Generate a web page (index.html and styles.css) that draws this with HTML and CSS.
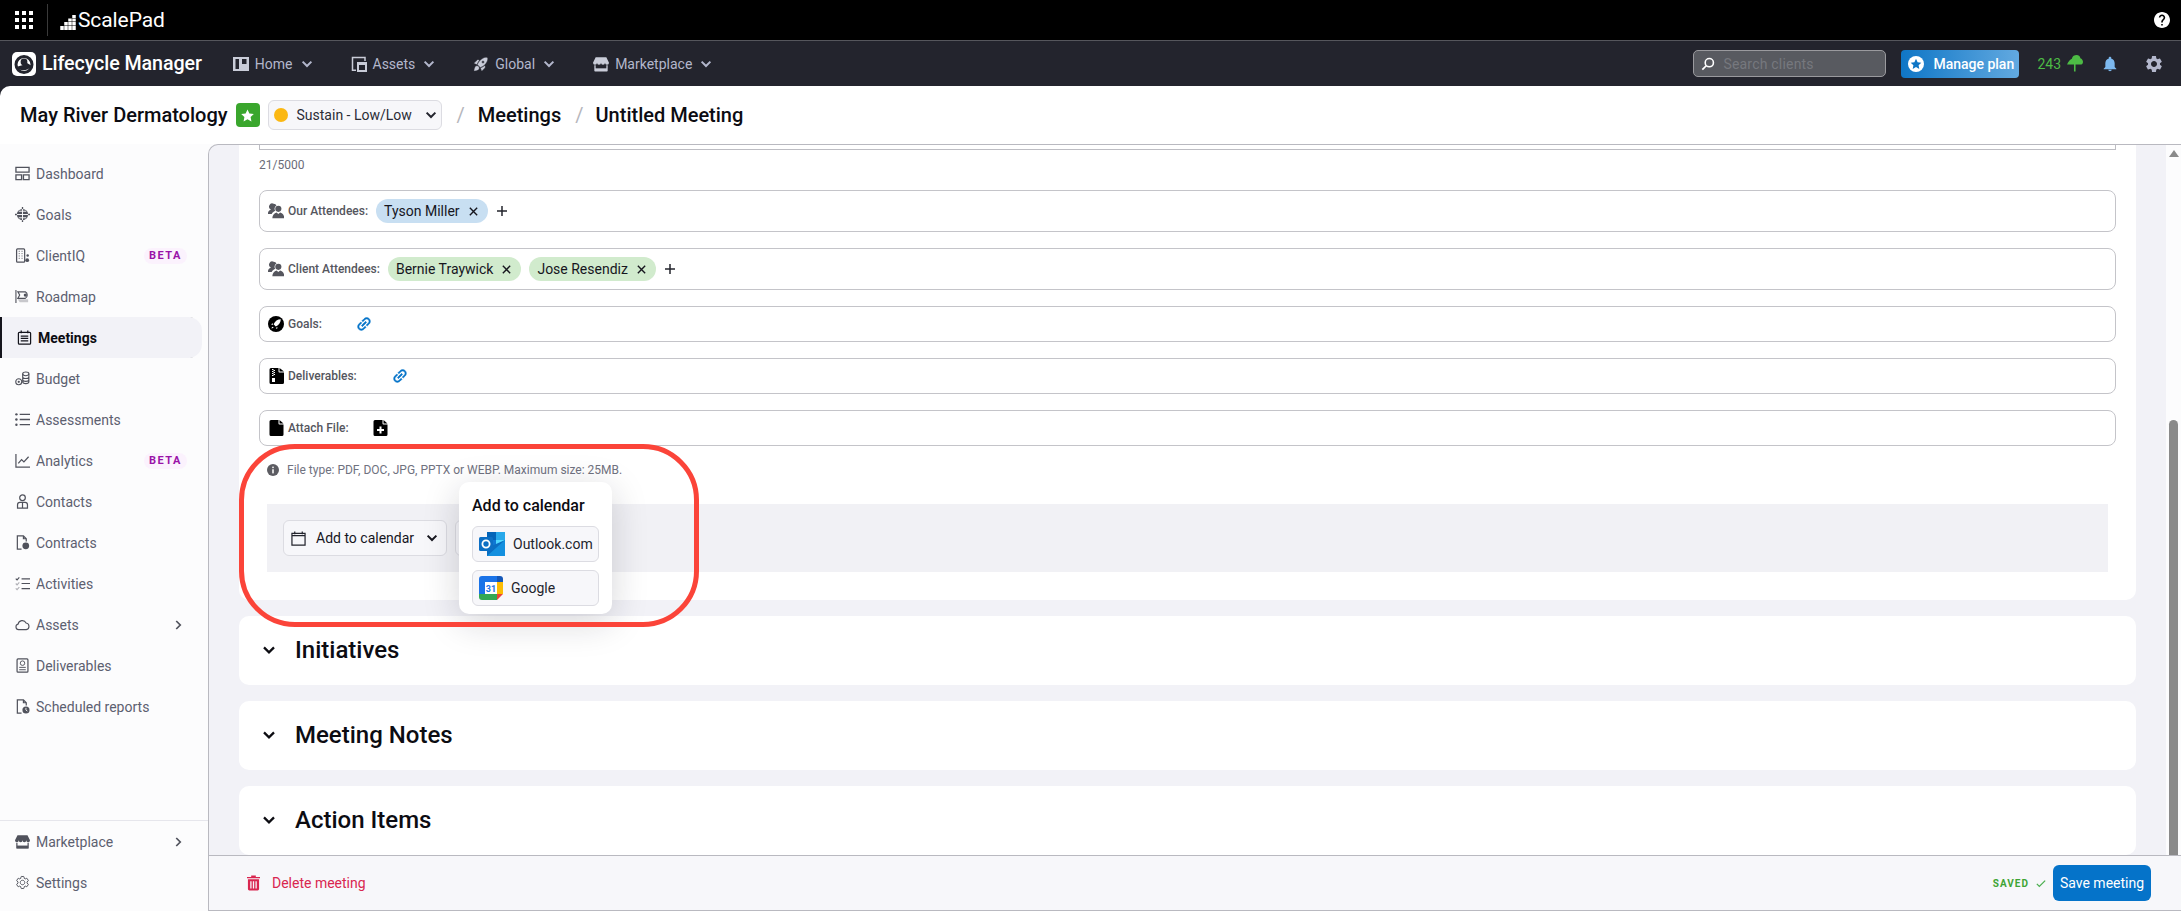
FILE: index.html
```html
<!DOCTYPE html>
<html lang="en">
<head>
<meta charset="utf-8">
<title>Untitled Meeting</title>
<link rel="stylesheet" href="styles.css">
</head>
<body>
<svg class="sprite" aria-hidden="true">
  <symbol id="chev" viewBox="0 0 24 24"><path d="M4.500 8l7.500 7.500L19.500 8" fill="none" stroke="currentColor" stroke-width="3.400"/></symbol>
  <symbol id="chevr" viewBox="0 0 24 24"><path d="M8.500 4l8 8-8 8" fill="none" stroke="currentColor" stroke-width="3.400"/></symbol>
  <symbol id="link" viewBox="0 0 24 24"><path transform="rotate(-45 12 12)" fill="currentColor" stroke="currentColor" stroke-width=".6" d="M3.900 12c0-1.710 1.390-3.100 3.100-3.100h4V7H7c-2.760 0-5 2.240-5 5s2.240 5 5 5h4v-1.900H7c-1.710 0-3.100-1.390-3.100-3.100zM8 13h8v-2H8v2zm9-6h-4v1.900h4c1.710 0 3.100 1.390 3.100 3.100s-1.390 3.100-3.100 3.100h-4V17h4c2.760 0 5-2.240 5-5s-2.240-5-5-5z"/></symbol>
  <symbol id="people" viewBox="0 0 24 24"><path fill="currentColor" d="M8.500 1a4.500 4.500 0 0 1 4.200 2.900 5.500 5.500 0 0 0-2.900 4.800c0 1.100.3 2.200 1 3l-2.300 1.400C7 13.900 6 15 5.500 16.500H.5c-.5 0-.8-.4-.7-.9.5-3 2.200-4.800 4.700-5.700A4.500 4.500 0 0 1 8.500 1z"/><circle cx="15.500" cy="8.800" r="4.600" fill="currentColor"/><path fill="currentColor" d="M6.500 23c0-4.600 2.800-8.200 6.300-8.800l2.700 2.300 2.700-2.300c3.500.6 6.300 4.200 6.300 8.800z"/></symbol>
  <symbol id="gear" viewBox="0 0 24 24"><path d="M19.140 12.940c.04-.3.06-.61.06-.94 0-.32-.02-.64-.07-.94l2.030-1.580c.18-.14.23-.41.12-.61l-1.920-3.320c-.12-.22-.37-.29-.59-.22l-2.390.96c-.5-.38-1.030-.7-1.620-.94l-.36-2.540c-.04-.24-.24-.41-.48-.41h-3.840c-.24 0-.43.17-.47.41l-.36 2.540c-.59.24-1.130.57-1.620.94l-2.390-.96c-.22-.08-.47 0-.59.22L2.740 8.870c-.12.21-.08.47.12.61l2.030 1.580c-.05.3-.09.63-.09.94s.02.64.07.94l-2.030 1.580c-.18.14-.23.41-.12.61l1.920 3.320c.12.22.37.29.59.22l2.390-.96c.5.38 1.030.7 1.620.94l.36 2.540c.05.24.24.41.48.41h3.840c.24 0 .44-.17.47-.41l.36-2.540c.59-.24 1.130-.56 1.620-.94l2.390.96c.22.08.47 0 .59-.22l1.920-3.320c.12-.22.07-.47-.12-.61l-2.010-1.580zM12 15.600c-1.980 0-3.600-1.620-3.600-3.600s1.620-3.600 3.600-3.600 3.600 1.620 3.600 3.600-1.620 3.600-3.600 3.600z"/></symbol>
  <symbol id="store" viewBox="0 0 24 24"><path fill="currentColor" d="M4 2h16l4 8a3 3 0 0 1-6 0 3 3 0 0 1-6 0 3 3 0 0 1-6 0 3 3 0 0 1-6 0z"/><path fill="none" stroke="currentColor" stroke-width="2" d="M3 14v8h18v-8"/><path fill="currentColor" d="M3 18.500h18V23H3z"/></symbol>
  <symbol id="x" viewBox="0 0 24 24"><path d="M4 4l16 16M20 4L4 20" fill="none" stroke="currentColor" stroke-width="3"/></symbol>
  <symbol id="plus" viewBox="0 0 24 24"><path d="M12 2v20M2 12h20" fill="none" stroke="currentColor" stroke-width="3"/></symbol>
</svg>

<div class="topbar">
  <svg class="ic-grid" viewBox="0 0 18 18"><g fill="#fff"><rect x="0" y="0" width="4" height="4"/><rect x="7" y="0" width="4" height="4"/><rect x="14" y="0" width="4" height="4"/><rect x="0" y="7" width="4" height="4"/><rect x="7" y="7" width="4" height="4"/><rect x="14" y="7" width="4" height="4"/><rect x="0" y="14" width="4" height="4"/><rect x="7" y="14" width="4" height="4"/><rect x="14" y="14" width="4" height="4"/></g></svg>
  <span class="top-divider"></span>
  <svg class="ic-scale" viewBox="0 0 15.500 15"><g fill="#fff"><rect x="0" y="11" width="3.500" height="4"/><rect x="4" y="7" width="3.500" height="3.500"/><rect x="4" y="11" width="3.500" height="4"/><rect x="8" y="3.500" width="3.500" height="3"/><rect x="8" y="7" width="3.500" height="3.500"/><rect x="8" y="11" width="3.500" height="4"/><rect x="12" y="0" width="3.500" height="3"/><rect x="12" y="3.500" width="3.500" height="3"/><rect x="12" y="7" width="3.500" height="3.500"/><rect x="12" y="11" width="3.500" height="4"/></g></svg>
  <span class="brand">ScalePad</span>
  <svg class="ic-help" viewBox="2 2 20 20"><path fill="#fff" d="M12 2C6.480 2 2 6.480 2 12s4.480 10 10 10 10-4.480 10-10S17.520 2 12 2zm1 17h-2v-2h2v2zm2.070-7.750l-.9.92C13.450 12.900 13 13.500 13 15h-2v-.5c0-1.100.45-2.100 1.170-2.830l1.240-1.260c.37-.36.59-.86.59-1.410 0-1.100-.9-2-2-2s-2 .9-2 2H8c0-2.210 1.790-4 4-4s4 1.790 4 4c0 .88-.36 1.680-.93 2.250z"/></svg>
</div>

<nav class="navbar">
  <svg class="ic-lm" viewBox="0 0 24 24"><rect width="24" height="24" rx="5" fill="#fff"/><circle cx="12" cy="12.500" r="8" fill="none" stroke="#23242d" stroke-width="3"/><path d="M4 15c3 4 11 5 16-1l-5-3-4 2z" fill="#23242d"/><circle cx="12" cy="10" r="3.400" fill="#23242d"/></svg>
  <span class="app-name">Lifecycle Manager</span>
  <div class="nav-menu">
    <a class="nav-item"><svg class="ic-nav" viewBox="0 0 16 16"><path fill="currentColor" fill-rule="evenodd" d="M0 1h16v14H0zM2.500 3v10h3.500V3zM9 3v5h4.500V3z"/></svg>Home<svg class="ic-chev"><use href="#chev"/></svg></a>
    <a class="nav-item"><svg class="ic-nav" viewBox="0 0 16 16"><path fill="none" stroke="currentColor" stroke-width="1.500" d="M5 14.200H1.500V1.500h12.500V5"/><path fill="currentColor" fill-rule="evenodd" d="M6 6h10v10H6zM8 9v5h6V9z"/></svg>Assets<svg class="ic-chev"><use href="#chev"/></svg></a>
    <a class="nav-item"><svg class="ic-nav" viewBox="0 0 24 24"><path fill="currentColor" stroke="currentColor" stroke-width=".5" d="M9.190 6.350c-2.040 2.290-3.440 5.580-3.570 5.890L2 10.690l4.050-4.050c.47-.47 1.150-.68 1.810-.55l1.330.26zM11.170 17s3.740-1.550 5.890-3.700c5.400-5.400 4.500-9.620 4.210-10.570-.95-.3-5.170-1.190-10.570 4.210C8.550 9.090 7 12.830 7 12.830L11.170 17zm6.480-2.190c-2.290 2.040-5.580 3.440-5.890 3.570L13.310 22l4.050-4.050c.47-.47.68-1.150.55-1.810l-.26-1.330zM9 18c0 .83-.34 1.580-.88 2.120C6.940 21.300 2 22 2 22s.7-4.940 1.880-6.120C4.420 15.340 5.170 15 6 15c1.660 0 3 1.340 3 3zm4-9c0-1.100.9-2 2-2s2 .9 2 2-.9 2-2 2-2-.9-2-2z"/></svg>Global<svg class="ic-chev"><use href="#chev"/></svg></a>
    <a class="nav-item"><svg class="ic-nav"><use href="#store"/></svg>Marketplace<svg class="ic-chev"><use href="#chev"/></svg></a>
  </div>
  <div class="nav-right">
    <label class="search"><svg class="ic-search" viewBox="0 0 16 16"><circle cx="9.500" cy="6.500" r="4.700" fill="none" stroke="#fff" stroke-width="1.800"/><path d="M6 10l-4.500 4.500" stroke="#fff" stroke-width="2"/></svg><span class="search-ph">Search clients</span></label>
    <a class="plan"><svg class="ic-plan" viewBox="0 0 16 16"><circle cx="8" cy="8" r="8" fill="#fff"/><path d="M8 2.800l1.600 3.400 3.700.5-2.700 2.500.7 3.700L8 11.100l-3.300 1.800.7-3.700-2.700-2.500 3.700-.5z" fill="#0f76c6"/></svg>Manage plan</a>
    <span class="trees">243<svg class="ic-tree" viewBox="0 0 16 16"><path fill="#4dbb45" d="M1 9C2 6 4 4 5.500 3.500 6 1 8 0 10 0c2 0 3.500 1.500 3.500 3C15 3.500 16 5 16 6.500 16 8 15 9 13.500 9H9v6.500H7.500V9z"/></svg></span>
    <svg class="ic-bell" viewBox="0 0 24 24"><path fill="#7cb8ee" d="M12 23c1.500 0 2.600-1 2.600-2.200H9.400C9.400 22 10.500 23 12 23zm7-6.500V11c0-3.400-1.800-6-5-6.800V3c0-1.100-.9-2-2-2s-2 .9-2 2v1.200C6.800 5 5 7.600 5 11v5.500L2.500 19v.800h19V19z"/></svg>
    <svg class="ic-cog"><use href="#gear"/></svg>
  </div>
</nav>

<header class="crumbs">
  <span class="client">May River Dermatology</span>
  <span class="badge"><svg class="ic-star" viewBox="0 0 16 16"><path fill="#fff" d="M8 1.500l2 4.300 4.700.6-3.400 3.200.9 4.700L8 11.900l-4.200 2.400.9-4.700L1.300 6.400 6 5.800z"/></svg></span>
  <span class="status"><span class="dot"></span><span class="status-text">Sustain - Low/Low</span><svg class="ic-chev ic-chev-dark"><use href="#chev"/></svg></span>
  <span class="slash">/</span><span class="crumb">Meetings</span><span class="slash slash-2">/</span><span class="crumb">Untitled Meeting</span>
</header>

<div class="app">
  <aside class="sidebar">
    <ul class="side-list">
      <li class="side-item"><svg class="ic-side" viewBox="0 0 16 16"><path fill="none" stroke="currentColor" stroke-width="1.400" d="M1 1.500h14v5H1zM1 9.500h6v5H1zM9 9.500h6v5H9z"/></svg>Dashboard</li>
      <li class="side-item"><svg class="ic-side" viewBox="0 0 16 16"><circle cx="8" cy="8" r="6" fill="currentColor"/><path stroke="#fcfcfd" d="M8 2v12M2 8h12M4 4.500h8M4 11.500h8"/><path stroke="currentColor" stroke-width="1.400" d="M8 0v16M0 8h16" stroke-dasharray="2 12"/></svg>Goals</li>
      <li class="side-item"><svg class="ic-side" viewBox="0 0 16 16"><rect x="1.700" y="1" width="8.600" height="14" rx="1" fill="none" stroke="currentColor" stroke-width="1.300"/><path stroke="currentColor" stroke-dasharray="1 1.500" d="M4.500 3v9M7.500 3v9"/><circle cx="13.500" cy="8" r="1.300" fill="currentColor"/><circle cx="13" cy="13" r="2" fill="currentColor"/></svg>ClientIQ<span class="beta">BETA</span></li>
      <li class="side-item"><svg class="ic-side" viewBox="0 0 16 16"><path stroke="currentColor" stroke-width="1.200" d="M1 1v14"/><path fill="none" stroke="currentColor" stroke-width="1.200" d="M3 3h8a4 4 0 0 1 0 7H3l2-3.500z"/><circle cx="11" cy="6.500" r="1.700" fill="currentColor"/><path fill="#c8c8cc" d="M3 11h11v3H5z"/></svg>Roadmap</li>
      <li class="side-item active"><svg class="ic-side" viewBox="0 0 16 16"><rect x="1.500" y="2.500" width="13" height="12.500" rx="1" fill="none" stroke="currentColor" stroke-width="1.300"/><path stroke="currentColor" stroke-width="1.300" d="M4.500 0.500v3M11.500 0.500v3M4 6.500h8M4 9h8M4 11.500h8"/></svg>Meetings</li>
      <li class="side-item"><svg class="ic-side" viewBox="0 0 16 16"><g fill="none" stroke="currentColor" stroke-width="1.200"><circle cx="4" cy="11.500" r="3.200"/><ellipse cx="11.500" cy="3" rx="3.300" ry="2"/><path d="M8.200 3v8.500c0 1.100 1.500 2 3.300 2s3.300-.9 3.300-2V3M8.200 6c0 1.100 1.500 2 3.300 2s3.300-.9 3.300-2M8.200 9c0 1.100 1.500 2 3.300 2s3.300-.9 3.300-2"/></g><circle cx="4" cy="11.500" r="1.200" fill="currentColor"/></svg>Budget</li>
      <li class="side-item"><svg class="ic-side" viewBox="0 0 16 16"><path stroke="currentColor" stroke-width="1.400" d="M5 2.500h11M5 8h11M5 13.500h11"/><g fill="currentColor"><circle cx="1.500" cy="2.500" r="1.300"/><circle cx="1.500" cy="8" r="1.300"/><circle cx="1.500" cy="13.500" r="1.300"/></g></svg>Assessments</li>
      <li class="side-item"><svg class="ic-side" viewBox="0 0 16 16"><path fill="none" stroke="currentColor" stroke-width="1.300" d="M1 1v14h15M3.500 11l3.500-4 2.500 2.500L14.500 4"/></svg>Analytics<span class="beta">BETA</span></li>
      <li class="side-item"><svg class="ic-side" viewBox="0 0 16 16"><circle cx="8" cy="4" r="3" fill="none" stroke="currentColor" stroke-width="1.300"/><path fill="none" stroke="currentColor" stroke-width="1.300" d="M2.700 15v-3.500c0-1.500 1-2.500 2.500-2.500h5.600c1.500 0 2.500 1 2.500 2.500V15zM8 9v6"/></svg>Contacts</li>
      <li class="side-item"><svg class="ic-side" viewBox="0 0 16 16"><path fill="none" stroke="currentColor" stroke-width="1.300" d="M7 15H2.500V1H9l3 3v3M9 1v3h3"/><circle cx="11.500" cy="11.500" r="3.600" fill="currentColor"/></svg>Contracts</li>
      <li class="side-item"><svg class="ic-side" viewBox="0 0 16 16"><path fill="none" stroke="currentColor" stroke-width="1.200" d="M.8 2.800l1.400 1.400L4.600 1.500"/><path fill="none" stroke="#b0b0b6" stroke-width="1.200" d="M.8 8l1.400 1.400L4.600 6.700M.8 13.200l1.400 1.400 2.400-2.700"/><path stroke="currentColor" stroke-width="1.300" d="M7 3h9M7 8h9M7 13.500h9"/></svg>Activities</li>
      <li class="side-item"><svg class="ic-side" viewBox="0 0 16 16"><path fill="none" stroke="currentColor" stroke-width="1.200" d="M3.800 13.500a3 3 0 0 1-.5-5.900A4.500 4.500 0 0 1 11.800 6.400 3.600 3.600 0 0 1 12 13.500z"/></svg>Assets<svg class="ic-side-chev"><use href="#chevr"/></svg></li>
      <li class="side-item"><svg class="ic-side" viewBox="0 0 16 16"><rect x="2.200" y="1" width="11.600" height="14" rx="1" fill="none" stroke="currentColor" stroke-width="1.300"/><circle cx="8" cy="5.500" r="2.400" fill="none" stroke="currentColor"/><path stroke="currentColor" d="M4.500 10h7M4.500 12.500h7"/></svg>Deliverables</li>
      <li class="side-item"><svg class="ic-side" viewBox="0 0 16 16"><path fill="none" stroke="currentColor" stroke-width="1.300" d="M7 15H2.500V1H9l3 3v3M9 1v3h3"/><circle cx="11.700" cy="11.700" r="3.800" fill="currentColor"/><path stroke="#fff" d="M11.700 9.500v2.300l1.500 1"/></svg>Scheduled reports</li>
    </ul>
    <ul class="side-list side-bottom">
      <li class="side-item"><svg class="ic-side"><use href="#store"/></svg>Marketplace<svg class="ic-side-chev"><use href="#chevr"/></svg></li>
      <li class="side-item"><svg class="ic-side ic-side-gear"><use href="#gear"/></svg>Settings</li>
    </ul>
  </aside>

  <main class="main">
    <div class="scroll">
      <div class="content">
        <section class="card">
          <div class="textarea-end"></div>
          <div class="count">21/5000</div>

          <div class="field tall">
            <svg class="ic-field ic-grey"><use href="#people"/></svg><span class="field-label">Our Attendees:</span>
            <span class="chip blue">Tyson Miller<svg class="ic-x"><use href="#x"/></svg></span>
            <svg class="ic-plus"><use href="#plus"/></svg>
          </div>
          <div class="field tall">
            <svg class="ic-field ic-grey"><use href="#people"/></svg><span class="field-label">Client Attendees:</span>
            <span class="chip green">Bernie Traywick<svg class="ic-x"><use href="#x"/></svg></span>
            <span class="chip green">Jose Resendiz<svg class="ic-x"><use href="#x"/></svg></span>
            <svg class="ic-plus"><use href="#plus"/></svg>
          </div>
          <div class="field">
            <svg class="ic-field" viewBox="0 0 16 16"><circle cx="8" cy="8" r="8" fill="#000"/><path fill="#fff" d="M12.800 3.200C9.500 3.300 7 5 5.600 8.200l2.200 2.200c3.200-1.400 4.900-3.900 5-7.200zM5 7.200L3 8.200l1.800.7zM8.800 11l-1 2 2-1.100zM3.500 12.500c.2-1 .7-1.700 1.400-1.800l.6.600c-.1.700-.9 1.100-2 1.200z"/></svg><span class="field-label label-goals">Goals:</span>
            <svg class="ic-link"><use href="#link"/></svg>
          </div>
          <div class="field">
            <svg class="ic-field" viewBox="0 0 16 16"><path fill="#000" fill-rule="evenodd" d="M1.500 1.500A1.500 1.500 0 0 1 3 0h7.500v3.500a1 1 0 0 0 1 1H16v10a1.500 1.500 0 0 1-1.500 1.500H3a1.500 1.500 0 0 1-1.500-1.500zM4 1v1h1.500V1zm1.500 1v1H7V2zM4 3v1h1.500V3zm1.500 1v1H7V4zM4 5v1h1.500V5zm1.500 1v1H7V6zM4 7v1h1.500V7zm0 3v4h3v-4z"/><path fill="#000" d="M11.500 0L16 3.500h-4.500z"/></svg><span class="field-label label-deliv">Deliverables:</span>
            <svg class="ic-link"><use href="#link"/></svg>
          </div>
          <div class="field">
            <svg class="ic-field" viewBox="0 0 16 16"><path fill="#000" d="M1.500 1.500A1.500 1.500 0 0 1 3 0h7.500v3.500a1 1 0 0 0 1 1H15.500v10A1.500 1.500 0 0 1 14 16H3a1.500 1.500 0 0 1-1.500-1.500zM11.500 0l4 3.500h-4z"/></svg><span class="field-label label-attach">Attach File:</span>
            <svg class="ic-file-plus" viewBox="0 0 16 16"><path fill="#000" d="M1.500 1.500A1.500 1.500 0 0 1 3 0h7.500v3.500a1 1 0 0 0 1 1H15.500v10A1.500 1.500 0 0 1 14 16H3a1.500 1.500 0 0 1-1.500-1.500zM11.500 0l4 3.500h-4z"/><path stroke="#fff" stroke-width="2" d="M8.500 6.500v7M5 10h7"/></svg>
          </div>

          <p class="note"><svg class="ic-info" viewBox="0 0 16 16"><circle cx="8" cy="8" r="8" fill="#5c5c62"/><rect x="7" y="7" width="2" height="5.500" fill="#fff"/><rect x="7" y="3.500" width="2" height="2" fill="#fff"/></svg>File type: PDF, DOC, JPG, PPTX or WEBP. Maximum size: 25MB.</p>

          <div class="panel">
            <button class="cal-btn"><svg class="ic-cal" viewBox="0 0 16 16"><path fill="none" stroke="#23242d" stroke-width="1.300" d="M1 2.500h14v12.500H1zM1 5h14M4 0.500v3M12 0.500v3"/></svg>Add to calendar<svg class="ic-chev ic-chev-black"><use href="#chev"/></svg></button>
            <button class="cal-btn cal-second"></button>
            <div class="popover">
              <div class="pop-title">Add to calendar</div>
              <button class="pop-btn">
                <svg class="ic-outlook" viewBox="0 0 26 24"><rect x="8" y="0" width="18" height="24" fill="#0f4c93"/><rect x="8" y="0" width="9" height="8" fill="#0364b8"/><rect x="17" y="0" width="9" height="8" fill="#28a8ea"/><rect x="8" y="8" width="9" height="8" fill="#0f78d4"/><rect x="17" y="8" width="9" height="8" fill="#50d9ff"/><path d="M8 16l18-8v16H8z" fill="#0a6fc2"/><path d="M8 24l18-16v16z" fill="#1490df"/><rect x="0" y="5" width="14" height="14" rx="1.500" fill="#0c6fc4"/><circle cx="7" cy="12" r="3.600" fill="none" stroke="#fff" stroke-width="1.800"/></svg>
                <span>Outlook.com</span>
              </button>
              <button class="pop-btn">
                <svg class="ic-gcal" viewBox="0 0 24 24"><path d="M3 0h15v6H6v12H0V3a3 3 0 0 1 3-3z" fill="#1a73e8"/><path d="M18 0h3a3 3 0 0 1 3 3v3h-6z" fill="#1557b8"/><path d="M18 6h6v12h-6z" fill="#fbbc04"/><path d="M0 18h18v6H3a3 3 0 0 1-3-3z" fill="#34a853"/><path d="M18 18h6l-6 6z" fill="#ea4335"/><rect x="6" y="6" width="12" height="12" fill="#fff"/><text x="12" y="15.500" class="gcal-day">31</text></svg>
                <span>Google</span>
              </button>
            </div>
          </div>
          <div class="ring"></div>
        </section>

        <section class="section"><svg class="ic-sec"><use href="#chev"/></svg><h2 class="sec-title">Initiatives</h2></section>
        <section class="section"><svg class="ic-sec"><use href="#chev"/></svg><h2 class="sec-title">Meeting Notes</h2></section>
        <section class="section"><svg class="ic-sec"><use href="#chev"/></svg><h2 class="sec-title">Action Items</h2></section>
      </div>
      <div class="scrollbar">
        <span class="sb-arrow"></span>
        <span class="sb-thumb"></span>
      </div>
    </div>
    <footer class="footer">
      <svg class="ic-trash" viewBox="0 0 14 16"><path fill="#d9264f" fill-rule="evenodd" d="M4.500 1.500V0h5v1.500H14V3H0V1.500zM1 4h12v10.500A1.500 1.500 0 0 1 11.500 16h-9A1.500 1.500 0 0 1 1 14.500zM3.500 6v8h1.400V6zm2.800 0v8h1.400V6zm2.800 0v8h1.400V6z"/></svg>
      <span class="delete">Delete meeting</span>
      <span class="saved">SAVED</span>
      <svg class="ic-check" viewBox="0 0 12 10"><path d="M1 5.500l3 3 7-7" fill="none" stroke="#4caf50" stroke-width="1.500"/></svg>
      <button class="save">Save meeting</button>
    </footer>
  </main>
</div>
</body>
</html>
```
FILE: styles.css
```css
* { box-sizing: border-box; }
html, body { margin: 0; padding: 0; }
body {
  width: 2181px; height: 911px; overflow: hidden;
  font-family: Roboto, "Liberation Sans", sans-serif;
  font-size: 14px; color: #23242d; background: #23242d;
  display: flex; flex-direction: column;
}
.sprite { display: none; }
svg { display: block; flex: none; }
ul { list-style: none; margin: 0; padding: 0; }
button { font-family: inherit; }

/* top bar */
.topbar {
  height: 41px; background: #000; border-bottom: 1px solid #55565c;
  display: flex; align-items: center; padding: 0 11px 0 15px; flex: none;
}
.ic-grid { width: 18px; height: 18px; }
.top-divider { width: 1px; height: 32px; background: #3a3a3a; margin: 0 12px 0 14px; }
.ic-scale { width: 16px; height: 15px; margin-right: 2px; margin-top: 5px; }
.brand { color: #fff; font-size: 21px; letter-spacing: -.1px; }
.ic-help { width: 16px; height: 16px; margin-left: auto; }

/* nav bar */
.navbar { height: 45px; display: flex; align-items: center; padding: 0 17px 0 12px; background: #23242d; flex: none; }
.ic-lm { width: 24px; height: 24px; }
.app-name { color: #fff; font-size: 19.700px; font-weight: 500; margin-left: 6px; letter-spacing: -.1px; }
.nav-menu { display: flex; margin-left: 31px; gap: 37px; }
.nav-item { display: flex; align-items: center; color: #b3b7cc; font-size: 14px; }
.ic-nav { width: 16px; height: 16px; margin-right: 6px; color: #c9ccd8; }
.ic-chev { width: 14px; height: 14px; margin-left: 7px; color: #b3b7cc; }
.nav-right { margin-left: auto; display: flex; align-items: center; }
.search {
  width: 193px; height: 27px; background: #585a60; border: 1px solid #9a9a9e; border-radius: 5px;
  display: flex; align-items: center; padding-left: 7px; margin-right: 15px;
}
.ic-search { width: 14px; height: 14px; margin-right: 8px; }
.search-ph { color: #76787e; font-size: 14px; letter-spacing: .2px; }
.plan {
  width: 118px; height: 28px; border-radius: 4px; color: #fff; font-size: 14px; font-weight: 500;
  background: linear-gradient(90deg, #0f76c6, #62a9e0);
  display: flex; align-items: center; padding-left: 7px; margin-right: 18px;
}
.ic-plan { width: 16px; height: 16px; margin-right: 9px; }
.trees { display: flex; align-items: center; color: #4dbb45; font-size: 14px; }
.ic-tree { width: 17px; height: 17px; margin-left: 5px; }
.ic-bell { width: 16px; height: 18px; margin-left: 19px; }
.ic-cog { width: 20px; height: 20px; margin-left: 26px; fill: #b3b7cc; }

/* breadcrumb */
.crumbs {
  height: 58px; background: #fff; border-radius: 10px 0 0 0; flex: none;
  display: flex; align-items: center; padding: 0 0 0 20px;
}
.client, .crumb { font-size: 20px; font-weight: 500; color: #0c0c12; white-space: nowrap; }
.badge {
  width: 24px; height: 24px; background: #3aa62d; border-radius: 4px; margin-left: 8px;
  display: flex; align-items: center; justify-content: center;
}
.ic-star { width: 15px; height: 15px; }
.status {
  width: 174px; height: 30px; margin-left: 8px; background: #f7f7fa; border: 1px solid #dcdce2; border-radius: 6px;
  display: flex; align-items: center; padding-left: 5px;
}
.dot { width: 14px; height: 14px; border-radius: 50%; background: #fbb813; flex: none; }
.status-text { margin-left: 9px; font-size: 14px; white-space: nowrap; color: #2b2c36; }
.ic-chev-dark { color: #23242d; margin-left: 12px; }
.slash { color: #b6b6bc; font-size: 20px; margin: 0 13px 0 15px; }
.slash-2 { margin: 0 12px 0 14px; }

/* app */
.app { flex: 1; min-height: 0; display: flex; background: #fcfcfd; }
.sidebar { width: 208px; flex: none; display: flex; flex-direction: column; justify-content: space-between; padding: 9px 0 8px; background: #fcfcfd; }
.side-item { height: 41px; display: flex; align-items: center; padding-left: 15px; color: #5c6070; font-size: 14px; position: relative; }
.side-item.active {
  width: 202px; background: #f2f2f7; color: #0c0c12; font-weight: 700; padding-left: 17px;
  border-radius: 0 14px 14px 0; box-shadow: inset 2px 0 0 #14141c;
}
.ic-side { width: 15px; height: 15px; margin-right: 6px; color: #50525c; }
.active .ic-side { color: #14141c; }
.ic-side-gear { fill: none; stroke: #50525c; stroke-width: 1.500px; }
.beta {
  position: absolute; left: 144px; top: 13px; height: 16px; padding: 0 5px; border-radius: 8px;
  background: #fbf2fd; color: #9a12a8; font-size: 11px; font-weight: 700; letter-spacing: 1.500px; line-height: 16px;
}
.ic-side-chev { width: 12px; height: 12px; position: absolute; left: 172px; top: 15px; color: #50525c; }
.side-bottom { border-top: 1px solid #e6e6ec; padding-top: 0; }

/* main */
.main { flex: 1; min-width: 0; display: flex; flex-direction: column; background: #f2f2f7; border-left: 1px solid #b9b9c0; border-top: 1px solid #b9b9c0; border-radius: 10px 0 0 0; overflow: hidden; }
.scroll { flex: 1; min-height: 0; display: flex; overflow: hidden; }
.content { flex: 1; min-width: 0; padding: 0 30px; display: flex; flex-direction: column; gap: 16px; }
.card { position: relative; background: #fff; height: 455px; flex: none; padding: 0 20px; border-radius: 0 0 10px 10px; }
.textarea-end { height: 5px; border: 1px solid #bdbdc3; border-top: 0; }
.count { font-size: 12px; color: #6a6c78; margin-top: 8px; height: 14px; line-height: 14px; margin-bottom: 18px; }
.field {
  height: 36px; border: 1px solid #c4c4c9; border-radius: 8px; background: #fff;
  display: flex; align-items: center; padding-left: 8px; margin-bottom: 16px;
}
.field.tall { height: 42px; margin-bottom: 16px; }
.ic-field { width: 16px; height: 16px; margin-right: 4px; }
.ic-grey { color: #55565e; }
.field-label { font-size: 12px; font-weight: 500; color: #55565e; white-space: nowrap; }
.label-goals { margin-right: 33px; }
.label-deliv { margin-right: 34px; }
.label-attach { margin-right: 23px; }
.chip {
  height: 24px; border-radius: 12px; padding: 0 9px 0 8px; display: flex; align-items: center; font-size: 14px; color: #16161e; margin-left: 8px; white-space: nowrap;
}
.chip.blue { background: #c8dff2; }
.chip.green { background: #d1ebcd; }
.ic-x { width: 11px; height: 11px; margin-left: 8px; }
.ic-plus { width: 12px; height: 12px; margin-left: 8px; color: #23242d; }
.ic-link { width: 18px; height: 18px; color: #0573c9; }
.ic-file-plus { width: 16px; height: 16px; }
.note { margin: 0 0 0 8px; display: flex; align-items: center; font-size: 12px; color: #70727f; height: 16px; }
.ic-info { width: 12px; height: 12px; margin-right: 8px; }
.panel { position: relative; margin: 26px 8px 0 8px; height: 68px; background: #f1f1f5; display: flex; align-items: center; padding-left: 16px; gap: 8px; }
.cal-btn {
  width: 164px; height: 36px; background: #f7f7fa; border: 1px solid #dcdce2; border-radius: 6px;
  display: flex; align-items: center; padding: 0 0 0 7px; font-size: 14px; color: #16161e;
}
.cal-second { width: 130px; }
.ic-cal { width: 15px; height: 15px; margin-right: 10px; }
.ic-chev-black { color: #16161e; margin-left: 11px; }
.popover {
  position: absolute; left: 192px; top: -22px; width: 153px; height: 132px; background: #fff; border-radius: 10px;
  box-shadow: 0 8px 36px rgba(20,20,40,.18); padding: 15px 13px 0; z-index: 5;
}
.pop-title { font-size: 16px; font-weight: 500; color: #0c0c12; height: 29px; line-height: 18px; }
.pop-btn {
  width: 127px; height: 36px; background: #f7f7fa; border: 1px solid #dcdce2; border-radius: 6px; margin-bottom: 8px;
  display: flex; align-items: center; padding: 0 0 0 6px; font-size: 14px; color: #23242d;
}
.ic-outlook { width: 26px; height: 24px; margin-right: 8px; }
.ic-gcal { width: 24px; height: 24px; margin-right: 8px; }
.gcal-day { font: 700 9px Roboto, sans-serif; fill: #1a73e8; text-anchor: middle; }
.ring {
  position: absolute; left: 0; top: 299px; width: 460px; height: 183px;
  border: 5px solid #fb4439; border-radius: 56px; z-index: 6; pointer-events: none;
}
.section { height: 69px; flex: none; background: #fff; border-radius: 10px; display: flex; align-items: center; padding: 0 0 2px 22px; }
.ic-sec { width: 16px; height: 16px; margin-right: 18px; color: #0c0c12; }
.sec-title { margin: 0; font-size: 24px; font-weight: 500; color: #0c0c12; }

/* scrollbar */
.scrollbar { width: 15px; flex: none; background: #fcfcfd; position: relative; padding-left: 3px; }
.sb-arrow { display: block; width: 0; height: 0; margin-top: 5px; border: 5px solid transparent; border-top: 0; border-bottom: 7px solid #8a8a8a; }
.sb-thumb { display: block; width: 9px; height: 440px; background: #8a8a8a; border-radius: 5px 5px 0 0; margin-top: 263px; }

/* footer */
.footer {
  height: 56px; flex: none; background: #f7f7fa; border-top: 1px solid #b9b9c0; border-bottom: 1px solid #b9b9c0;
  display: flex; align-items: center; padding: 0 30px 0 38px;
}
.ic-trash { width: 13px; height: 16px; margin-right: 12px; }
.delete { color: #d9264f; font-size: 14px; }
.saved { margin-left: auto; color: #3fa535; font-size: 10px; font-weight: 700; letter-spacing: 1px; }
.ic-check { width: 10px; height: 9px; margin: 0 7px 0 7px; }
.save { width: 98px; height: 36px; background: #0573c9; color: #fff; border: 0; border-radius: 6px; font-size: 14px; padding: 0; }
```
